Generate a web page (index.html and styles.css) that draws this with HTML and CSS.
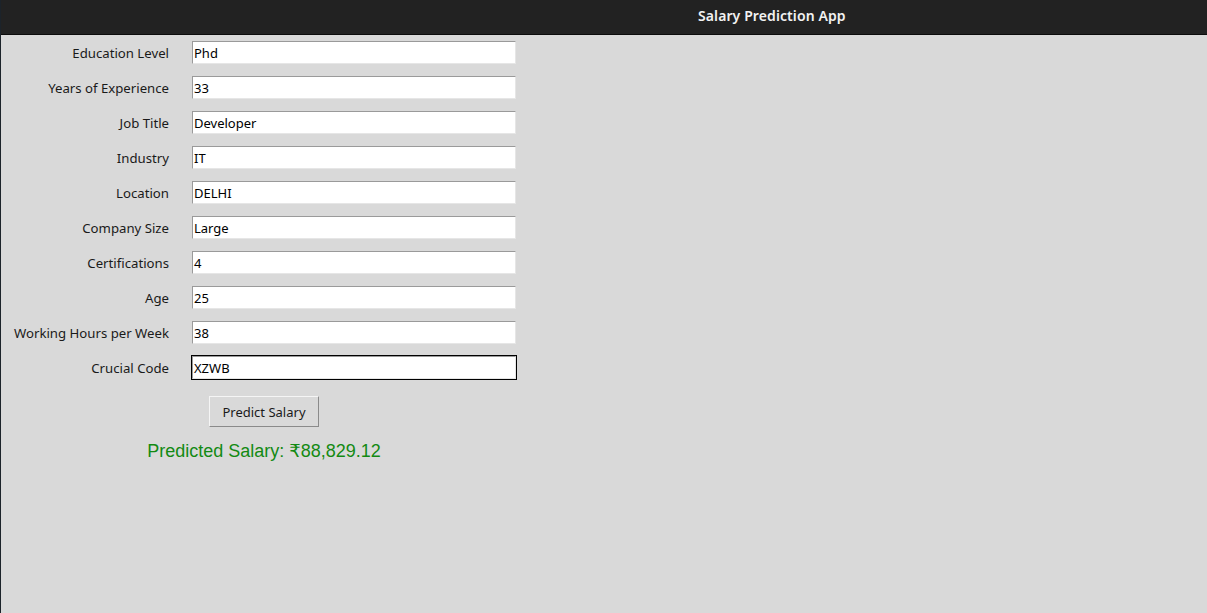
FILE: index.html
```html
<!DOCTYPE html>
<html>
<head>
<meta charset="utf-8">
<title>Salary Prediction App</title>
<link rel="stylesheet" href="styles.css">
</head>
<body>
<div class="window">
  <header class="titlebar"><span class="title">Salary Prediction App</span></header>
  <main class="content">
    <div class="panel">
      <form class="form">
        <label class="lbl">Education Level</label><div class="entry"><span>Phd</span></div>
        <label class="lbl">Years of Experience</label><div class="entry"><span>33</span></div>
        <label class="lbl">Job Title</label><div class="entry"><span>Developer</span></div>
        <label class="lbl">Industry</label><div class="entry"><span>IT</span></div>
        <label class="lbl">Location</label><div class="entry"><span>DELHI</span></div>
        <label class="lbl">Company Size</label><div class="entry"><span>Large</span></div>
        <label class="lbl">Certifications</label><div class="entry"><span>4</span></div>
        <label class="lbl">Age</label><div class="entry"><span>25</span></div>
        <label class="lbl">Working Hours per Week</label><div class="entry"><span>38</span></div>
        <label class="lbl">Crucial Code</label><div class="entry focused"><span>XZWB</span></div>
      </form>
      <div class="actions">
        <button class="btn" type="button">Predict Salary</button>
      </div>
      <div class="result">Predicted Salary: ₹88,829.12</div>
    </div>
  </main>
</div>
</body>
</html>
```

FILE: styles.css
```css
html, body {
  margin: 0;
  padding: 0;
  height: 100%;
}
body {
  background: #d9d9d9;
  font-family: "Noto Sans", "DejaVu Sans", sans-serif;
  overflow: hidden;
}
.window {
  display: flex;
  flex-direction: column;
  height: 613px;
  width: 1207px;
  border-left: 1px solid #1c232a;
  box-sizing: border-box;
}
.titlebar {
  height: 35px;
  box-sizing: border-box;
  padding-bottom: 3px;
  background: #222222;
  border-bottom: 1px solid #0c0c0c;
  display: flex;
  align-items: center;
  padding-left: 697px;
}
.title {
  color: #f2f2f2;
  font-weight: 600;
  font-size: 14px;
  letter-spacing: 0.1px;
}
.content {
  flex: 1;
  background: #d9d9d9;
}
.panel {
  width: 508px;
  margin-left: 9px;
  display: flex;
  flex-direction: column;
}
.form {
  display: grid;
  grid-template-columns: 159px 326px;
  column-gap: 22px;
  row-gap: 10px;
  padding-top: 5px;
  align-items: center;
}
.lbl {
  text-align: right;
  font-size: 13.2px;
  color: #1a1a1a;
  white-space: nowrap;
}
.entry {
  height: 25px;
  box-sizing: border-box;
  border: 1px solid #d9d9d9;
  display: flex;
}
.entry span {
  flex: 1;
  background: #ffffff;
  border-top: 1px solid #9a9a9a;
  border-left: 1px solid #9a9a9a;
  border-right: 1px solid #e6e6e6;
  border-bottom: 1px solid #e6e6e6;
  font-size: 13px;
  line-height: 21px;
  padding-left: 1px;
  padding-top: 1px;
  height: 20px;
  color: #000;
}
.entry.focused {
  border-color: #000000;
}
.actions {
  display: flex;
  justify-content: center;
  padding-top: 16px;
}
.btn {
  width: 110px;
  height: 31px;
  background: #d9d9d9;
  border-top: 1px solid #f5f5f5;
  border-left: 1px solid #f5f5f5;
  border-right: 1px solid #8a8a8a;
  border-bottom: 1px solid #8a8a8a;
  font-family: "Noto Sans", "DejaVu Sans", sans-serif;
  font-size: 13px;
  color: #1a1a1a;
  padding: 0;
}
.result {
  text-align: center;
  font-family: "Liberation Sans", Arial, "DejaVu Sans", sans-serif;
  font-size: 18px;
  color: #138a13;
  padding-top: 13px;
  line-height: 22px;
}
```
